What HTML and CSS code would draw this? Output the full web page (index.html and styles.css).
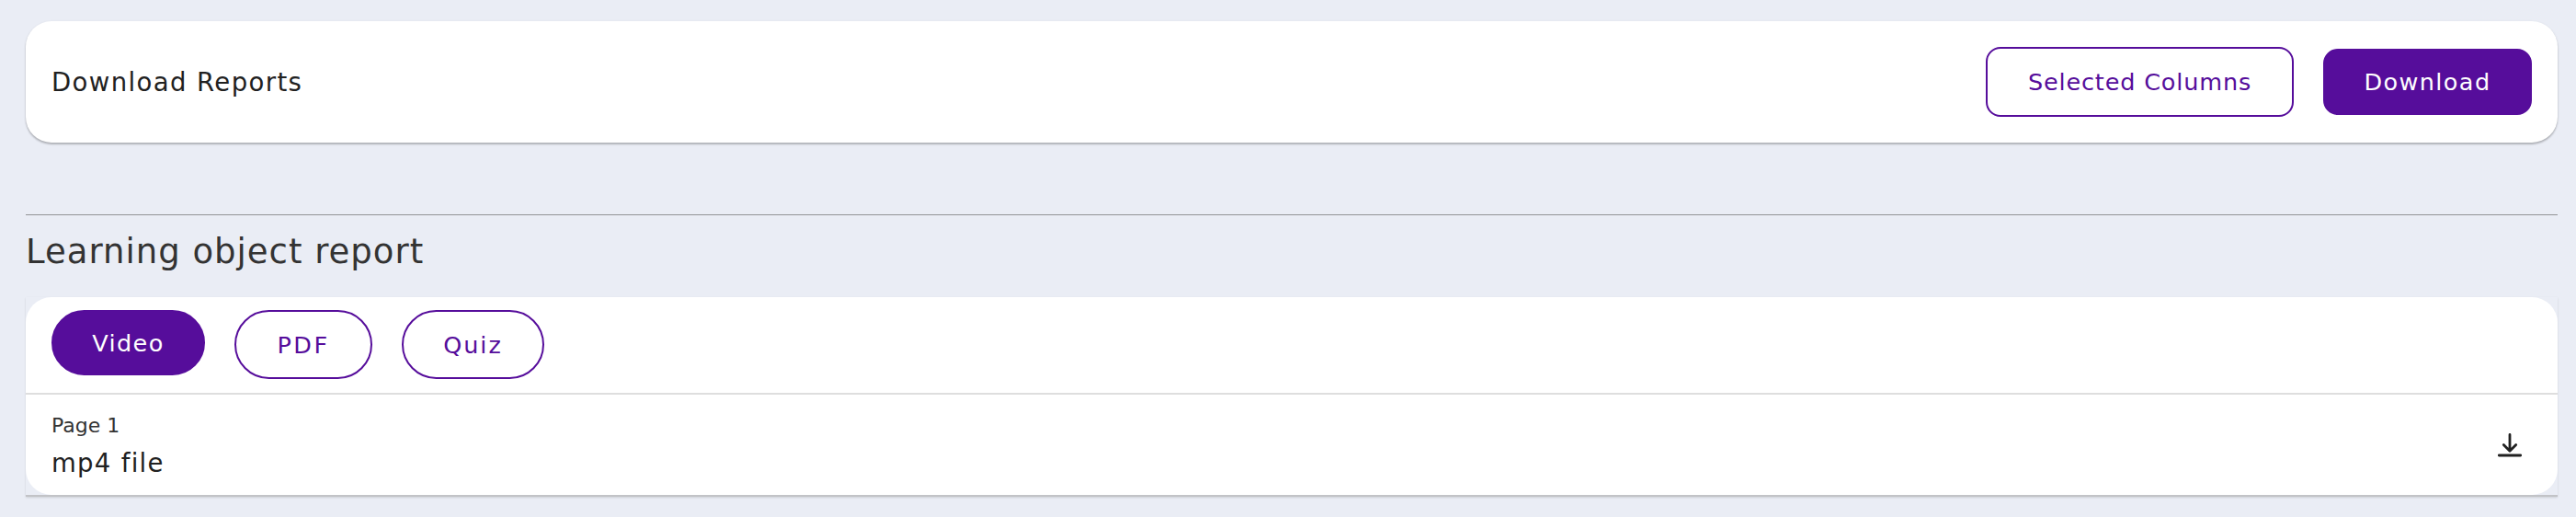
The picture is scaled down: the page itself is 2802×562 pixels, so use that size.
FILE: index.html
```html
<!DOCTYPE html>
<html lang="en">
<head>
    <meta charset="UTF-8">
    <meta name="viewport" content="width=device-width, initial-scale=1.0">
    <title>Reports</title>
    <link rel="stylesheet" href="styles.css">
</head>
<body>
    <!-- Download reports -->
    <div class="download-card">
        <div class="download-title">Download Reports</div>
        <div class="download-actions">
            <button class="btn btn-outline">Selected Columns</button>
            <button class="btn btn-filled">Download</button>
        </div>
    </div>

    <hr class="divider">

    <!-- Learning object report -->
    <h2 class="section-title">Learning object report</h2>
    <div class="report">
        <div class="tabs">
            <button class="tab active">Video</button>
            <button class="tab tab-pdf">PDF</button>
            <button class="tab tab-quiz">Quiz</button>
        </div>
        <div class="report-row">
            <div class="file-info">
                <div class="file-page">Page 1</div>
                <div class="file-name">mp4 file</div>
            </div>
            <svg class="download-icon" width="28" height="28" viewBox="0 0 28 28">
                <path d="M14 2.5V20M7.3 13.5L14 20.2L20.7 13.5M2.3 25H25.7"/>
            </svg>
        </div>
    </div>
</body>
</html>
```
FILE: styles.css
```css
* {
    margin: 0;
    padding: 0;
    box-sizing: border-box;
}

body {
    font-family: 'DejaVu Sans', sans-serif;
    background: #eaedf5;
    padding: 23px 20px 0 28px;
    height: 562px;
    overflow: hidden;
    color: #212121;
}

/* Download reports card */
.download-card {
    height: 132px;
    padding: 0 28px;
    display: flex;
    align-items: center;
    justify-content: space-between;
    background: white;
    border-radius: 28px;
    box-shadow: 0 2px 2px rgba(0, 0, 0, 0.2),
        0 1px 3px rgba(0, 0, 0, 0.1);
}

.download-title {
    font-size: 27.5px;
    letter-spacing: 1.4px;
}

.download-actions {
    display: flex;
    align-items: center;
    gap: 32px;
}

/* Buttons */
.btn,
.tab {
    font-family: inherit;
    font-size: 25.5px;
    line-height: 32px;
    white-space: nowrap;
    cursor: pointer;
    color: #560d9b;
    background: white;
    border: 2px solid #560d9b;
}

.btn {
    border-radius: 16px;
}

.btn-outline {
    width: 335px;
    height: 76px;
    letter-spacing: 0.85px;
}

.btn-filled {
    width: 227px;
    height: 72px;
    letter-spacing: 1.4px;
    color: white;
    background: #560d9b;
}

.divider {
    border: none;
    height: 1px;
    margin: 78px 0 0;
    background: #929396;
}

.section-title {
    font-size: 37px;
    font-weight: 400;
    line-height: 46px;
    letter-spacing: 1px;
    color: #333;
    padding-top: 17px;
    height: 89px;
}

/* Report list */
.report {
    height: 217px;
    border-bottom: 2px solid #c2c3c7;
    box-shadow: 0 1px 2px rgba(0, 0, 0, 0.12);
}

.tabs {
    height: 104px;
    padding: 14px 28px;
    display: flex;
    align-items: flex-start;
    gap: 32px;
    background: white;
    border-radius: 28px 28px 0 0;
}

.tab {
    height: 75px;
    border-radius: 38px;
    letter-spacing: 1.4px;
}

.tab.active {
    width: 167px;
    height: 71px;
    color: white;
    background: #560d9b;
}

.tab-pdf {
    width: 150px;
    letter-spacing: 2.5px;
}

.tab-quiz {
    width: 155px;
    letter-spacing: 2px;
}

.report-row {
    height: 111px;
    padding: 0 38px 0 28px;
    display: flex;
    align-items: center;
    justify-content: space-between;
    background: white;
    border-top: 2px solid #dedede;
    border-radius: 0 0 28px 28px;
}

.file-info {
    padding-top: 6px;
}

.file-page {
    font-size: 22px;
    line-height: 32px;
    color: #333;
}

.file-name {
    font-size: 27.5px;
    line-height: 48px;
    letter-spacing: 1.3px;
}

.download-icon {
    fill: none;
    stroke: #212121;
    stroke-width: 2.8;
    stroke-linecap: round;
    stroke-linejoin: round;
}
```
